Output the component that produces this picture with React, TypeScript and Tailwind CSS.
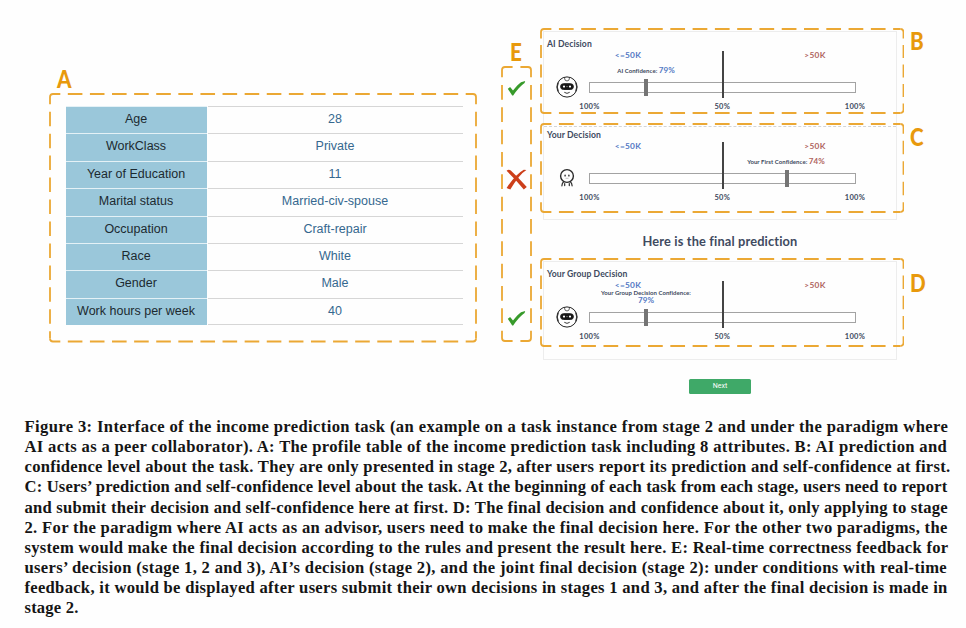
import type { ReactNode } from "react";

type FrameProps = {
  width: number;
  height: number;
  across: number;
  down: number;
  className: string;
};

/* Rounded dashed outline whose dashes are symmetric around every corner. */
function DashedFrame({ width, height, across, down, className }: FrameProps) {
  const r = 3;
  const w = width - 2;
  const h = height - 2;
  const px = (w - 2 * r) / across;
  const py = (h - 2 * r) / down;
  const dash = (p: number) => ({
    strokeDasharray: `${p * 0.66} ${p * 0.34}`,
    strokeDashoffset: p * 0.33,
  });
  return (
    <svg
      className={`pointer-events-none absolute ${className}`}
      width={width}
      height={height}
      fill="none"
      stroke="#eba834"
      strokeWidth="1.8"
    >
      <g transform="translate(1 1)">
        <path d={`M${r} 0H${w - r}`} {...dash(px)} />
        <path d={`M${r} ${h}H${w - r}`} {...dash(px)} />
        <path d={`M0 ${r}V${h - r}`} {...dash(py)} />
        <path d={`M${w} ${r}V${h - r}`} {...dash(py)} />
        <path d={`M0 ${r}Q0 0 ${r} 0M${w - r} 0Q${w} 0 ${w} ${r}M${w} ${h - r}Q${w} ${h} ${w - r} ${h}M${r} ${h}Q0 ${h} 0 ${h - r}`} />
      </g>
    </svg>
  );
}

function Letter({ children, className = "" }: { children: string; className?: string }) {
  return (
    <div className={`w-fit origin-left scale-x-[0.86] font-['Lato',sans-serif] text-[24px] leading-6 font-black text-[#e8990c] ${className}`}>
      {children}
    </div>
  );
}

const profile = [
  ["Age", "28"],
  ["WorkClass", "Private"],
  ["Year of Education", "11"],
  ["Marital status", "Married-civ-spouse"],
  ["Occupation", "Craft-repair"],
  ["Race", "White"],
  ["Gender", "Male"],
  ["Work hours per week", "40"],
];

function ProfileTable() {
  return (
    <div className="flex w-[397px] flex-col font-['Liberation_Sans',sans-serif] text-[12.5px]">
      {profile.map(([name, value], i) => (
        <div key={name} className="flex h-[27.4px] text-center leading-[25.5px]">
          <div className="w-[141px] border-t border-[#e4f1f6] bg-[#9ac7da] pr-px text-[#1c2a30]">{name}</div>
          <div
            className={`ml-px flex-1 border-t border-[#d6d6d6] pr-px text-[#35688f] ${
              i === profile.length - 1 ? "border-b" : ""
            }`}
          >
            {value}
          </div>
        </div>
      ))}
    </div>
  );
}

function Check() {
  return (
    <svg width="19" height="17" viewBox="0 0 19 17" fill="#379a2b">
      <path d="M.8 8.8 3.1 7.1 6 10.6Q10.5 4.6 14 2.2L18.2 1.1 17.6 3Q11.5 7.3 6.2 15.6H5.2Z" />
    </svg>
  );
}

function Cross() {
  return (
    <svg width="21" height="21" viewBox="0 0 21 21" fill="#cc3f1a">
      <path d="M.6 1.8Q2.6-.2 4.8 1.4Q13 9 20.8 18L17.8 20.6Q9.6 10.4 .6 1.8Z" />
      <path d="M20.4 1Q13.4 5.2 4.3 20.6L.6 18.9Q10 5 17.8.8Z" />
    </svg>
  );
}

function RobotIcon() {
  return (
    <svg className="-mt-[2px]" width="22" height="22" viewBox="0 0 22 22" fill="none" stroke="#222" strokeWidth="1">
      <circle cx="11" cy="11" r="10.1" />
      <path d="M2.5 6.5Q0 11 2.5 15.5M19.5 6.5Q22 11 19.5 15.5" strokeWidth=".9" />
      <path d="M8.4 1.5Q8.4 5 11 5T13.6 1.5" strokeWidth=".7" />
      <rect x="4.6" y="7.7" width="12.8" height="5.8" rx="2.9" fill="#151515" />
      <circle cx="8" cy="10.6" r="1.1" fill="#fff" stroke="none" />
      <circle cx="14" cy="10.6" r="1.1" fill="#fff" stroke="none" />
      <path d="M10 10.6H12" stroke="#777" strokeWidth=".8" />
      <path d="M8.3 16.3Q11 18.4 13.7 16.3" strokeWidth=".9" />
    </svg>
  );
}

function PersonIcon() {
  return (
    <svg className="-mt-[2px]" width="22" height="22" viewBox="0 0 22 22" fill="none" stroke="#2b2b2b" strokeWidth="1.4" strokeLinecap="round">
      <circle cx="11" cy="9" r="6.4" />
      <path d="M7.6 14.8Q6 16.3 5.9 18.8M14.4 14.8Q16 16.3 16.1 18.8M8.7 16.6V18.6M13.3 16.6V18.6" strokeWidth="1.2" />
      <path d="M9.1 8.2V8.9M12.9 8.2V8.9" />
      <path d="M9.9 11.3H12.1" stroke="#999" strokeWidth=".6" />
    </svg>
  );
}

type DecisionProps = {
  title: string;
  icon: ReactNode;
  confidence: ReactNode;
  confidenceClass: string;
  handleClass: string;
  className: string;
  frame: ReactNode;
};

function Decision({ title, icon, confidence, confidenceClass, handleClass, className, frame }: DecisionProps) {
  return (
    <section className={`relative flex flex-col text-[#404a60] ${className}`}>
      <h3 className="pl-[3px] text-[8.6px] leading-[14px] font-bold tracking-[0.1px]">{title}</h3>
      <div className="flex h-[9px] pl-[34px] text-center text-[8.3px] leading-[9px] font-bold tracking-[0.3px]">
        <span className="w-[100px] text-[#5379c4]">&lt;=50K</span>
        <span className="ml-[87px] w-[100px] text-[#b0645f]">&gt;50K</span>
      </div>
      <div className={`flex h-[17px] w-[140px] flex-col items-center justify-end pb-[2px] text-[6px] font-bold tracking-[0.05px] whitespace-nowrap ${confidenceClass}`}>
        {confidence}
      </div>
      <div className="flex h-[21px] items-center">
        <div className="ml-3 w-[33px]">{icon}</div>
        <div className="relative h-[11px] w-[267px] border border-[#a3a3a3] bg-white">
          <div className="absolute -top-[32px] left-[132px] h-[47px] w-[2px] bg-[#444]" />
          <div className={`absolute -top-1 h-[17px] w-1 bg-[#757575] ${handleClass}`} />
        </div>
      </div>
      <div className="mt-1 flex w-[306px] justify-between pl-[30.5px] text-center text-[7.5px] leading-[10px] font-bold tracking-[0.3px]">
        <span className="w-[30px]">100%</span>
        <span className="w-[30px]">50%</span>
        <span className="-mr-5 w-[30px]">100%</span>
      </div>
      {frame}
    </section>
  );
}

const caption: [string, number][] = [
  ["Figure 3: Interface of the income prediction task (an example on a task instance from stage 2 and under the paradigm where", 924],
  ["AI acts as a peer collaborator). A: The profile table of the income prediction task including 8 attributes. B: AI prediction and", 925],
  ["confidence level about the task. They are only presented in stage 2, after users report its prediction and self-confidence at first.", 926.5],
  ["C: Users’ prediction and self-confidence level about the task. At the beginning of each task from each stage, users need to report", 925],
  ["and submit their decision and self-confidence here at first. D: The final decision and confidence about it, only applying to stage", 924],
  ["2. For the paradigm where AI acts as an advisor, users need to make the final decision here. For the other two paradigms, the", 925],
  ["system would make the final decision according to the rules and present the result here. E: Real-time correctness feedback for", 924],
  ["users’ decision (stage 1, 2 and 3), AI’s decision (stage 2), and the joint final decision (stage 2): under conditions with real-time", 925],
  ["feedback, it would be displayed after users submit their own decisions in stages 1 and 3, and after the final decision is made in", 924],
  ["stage 2.", 54],
];

/* Tracking that spreads a caption line over its measure. */
function trackingFor(line: string, width: number) {
  const ctx = document.createElement("canvas").getContext("2d");
  if (!ctx) return 0;
  ctx.font = 'bold 16.6px "Liberation Serif"';
  return (width - ctx.measureText(line).width) / line.length;
}

export default function App() {
  return (
    <main className="flex h-[628px] w-[966px] flex-col overflow-hidden bg-[#fefefe]">
      <div className="flex h-[417px] shrink-0">
        <div className="ml-[49px] w-[428px] pt-[67px]">
          <Letter className="ml-[8px]">A</Letter>
          <div className="relative mt-[2px] h-[249px] pt-[13px] pl-[17px]">
            <ProfileTable />
            <DashedFrame width={428} height={249.5} across={19} down={11} className="-left-[0.5px] top-0" />
          </div>
        </div>

        <div className="ml-[23.5px] w-[31px] pt-10">
          <Letter className="ml-[9px]">E</Letter>
          <div className="relative mt-[2px] flex h-[276px] flex-col items-center">
            <div className="mt-[14px]"><Check /></div>
            <div className="mt-[72px]"><Cross /></div>
            <div className="mt-[120px]"><Check /></div>
            <DashedFrame width={31} height={276} across={1} down={12} className="left-0 top-0" />
          </div>
        </div>

        <div className="ml-[11.5px] flex w-[354px] flex-col pt-[31px] font-['Lato',sans-serif]">
          <div className="flex flex-col border border-[#ededed]">
            <Decision
              title="AI Decision"
              icon={<RobotIcon />}
              className="h-[94px] pt-[5px]"
              confidence={<span className="leading-[9px]">AI Confidence: <span className="text-[8px] text-[#5379c4]">79%</span></span>}
              confidenceClass="ml-[32px]"
              handleClass="left-[54px]"
              frame={<DashedFrame width={364.5} height={86} across={16} down={4} className="-left-[4.5px] -top-[4.5px]" />}
            />
            <Decision
              title="Your Decision"
              icon={<PersonIcon />}
              className="h-[93px] border-t border-dashed border-[#d4d4d4] pt-px"
              confidence={<span className="leading-[9px]">Your First Confidence: <span className="text-[8px] text-[#b0645f]">74%</span></span>}
              confidenceClass="ml-[172px]"
              handleClass="left-[195px]"
              frame={<DashedFrame width={364.5} height={90} across={16} down={4} className="-left-[4.5px] -top-[4.5px]" />}
            />
          </div>
          <h2 className="mt-[11px] h-[30px] text-center text-[12.8px] leading-5 font-bold tracking-[0.15px] text-[#404a60]">
            Here is the final prediction
          </h2>
          <div className="border border-[#ededed]">
            <Decision
              title="Your Group Decision"
              icon={<RobotIcon />}
              className="h-[97px] pt-[5px]"
              confidence={
                <>
                  <span className="leading-[7px]">Your Group Decision Confidence:</span>
                  <span className="text-[8px] leading-[9px] text-[#5379c4]">79%</span>
                </>
              }
              confidenceClass="ml-[32px]"
              handleClass="left-[54px]"
              frame={<DashedFrame width={364.5} height={89} across={16} down={4} className="-left-[4.5px] -top-[4px]" />}
            />
          </div>
          <button className="mt-[19px] h-[15px] w-[62px] self-center rounded-[1.5px] bg-[#3fa968] font-['Roboto',sans-serif] text-[7px] leading-[15px] text-white">
            Next
          </button>
        </div>

        <div className="ml-[13px] flex flex-col pt-[29px]">
          <Letter>B</Letter>
          <Letter className="mt-[72px]">C</Letter>
          <Letter className="mt-[122px]">D</Letter>
        </div>
      </div>

      <div className="ml-[24.5px] font-['Liberation_Serif',serif] text-[16.6px] leading-[20.15px] font-bold text-[#151515]">
        {caption.map(([line, width]) => (
          <p key={line} className="whitespace-nowrap" style={{ letterSpacing: trackingFor(line, width) }}>
            {line}
          </p>
        ))}
      </div>
    </main>
  );
}
